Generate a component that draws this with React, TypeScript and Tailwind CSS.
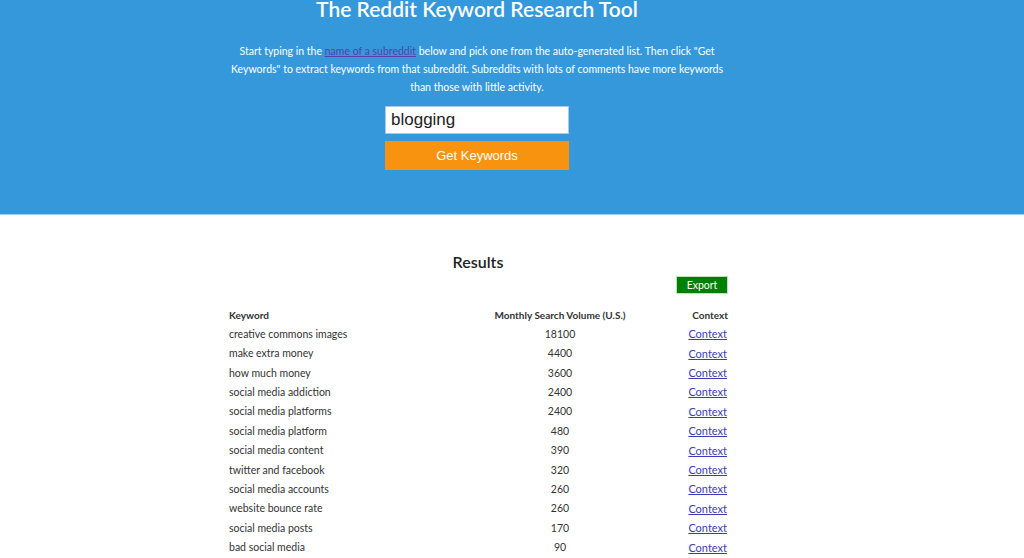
import React from "react";

const rows: [string, string][] = [
  ["creative commons images", "18100"],
  ["make extra money", "4400"],
  ["how much money", "3600"],
  ["social media addiction", "2400"],
  ["social media platforms", "2400"],
  ["social media platform", "480"],
  ["social media content", "390"],
  ["twitter and facebook", "320"],
  ["social media accounts", "260"],
  ["website bounce rate", "260"],
  ["social media posts", "170"],
  ["bad social media", "90"],
];

const App: React.FC = () => {
  return (
    <div className="min-h-[558px] bg-white font-['Lato',sans-serif] overflow-hidden">
      <div className="bg-[#3598db] border-b border-[#9dcdf0] h-[215px] flex flex-col items-center">
        <div className="w-[500px] ml-[-70px] flex flex-col items-center">
          <h1 className="text-white text-[21px] font-semibold leading-none mt-[-2px]">The Reddit Keyword Research Tool</h1>
          <p className="text-white text-[10.5px] leading-[18px] text-center mt-[23px] whitespace-nowrap">
            Start typing in the{" "}
            <a href="#" className="text-[#5b3fa8] underline">
              name of a subreddit
            </a>{" "}
            below and pick one from the auto-generated list. Then click "Get
            <br />
            Keywords" to extract keywords from that subreddit. Subreddits with lots of comments have more keywords
            <br />
            than those with little activity.
          </p>
          <input
            readOnly
            value="blogging"
            className="mt-[10px] w-[184px] h-[28px] bg-white border border-[#a9c9e8] px-[5px] text-[17px] text-[#222] font-['Liberation_Sans',sans-serif] outline-none"
          />
          <button className="mt-[7px] w-[184px] h-[29px] bg-[#f7930f] text-white text-[13px] font-['Liberation_Sans',sans-serif]">
            Get Keywords
          </button>
        </div>
      </div>

      <div className="w-[500px] ml-[228px] pt-[34px]">
        <h2 className="text-center text-[16px] font-semibold text-[#222] leading-[26px]">Results</h2>
        <div className="flex justify-end mt-[1px]">
          <button className="bg-[#008000] text-white text-[10.5px] w-[52px] h-[18px] leading-none border border-[#bfe0bf]">Export</button>
        </div>
        <table className="w-full mt-[11px] text-[10.5px] text-[#333] border-collapse">
          <thead>
            <tr className="h-[20px]">
              <th className="text-left font-bold text-[10px] p-0 pl-[1px]">Keyword</th>
              <th className="text-center font-bold text-[10px] p-0 w-[216px]">Monthly Search Volume (U.S.)</th>
              <th className="text-right font-bold text-[10px] p-0 w-[60px]">Context</th>
            </tr>
          </thead>
          <tbody>
            {rows.map(([k, v], i) => (
              <tr key={i} className="h-[19.4px]">
                <td className="p-0 pl-[1px]">{k}</td>
                <td className="p-0 text-center">{v}</td>
                <td className="p-0 text-right pr-[1px]">
                  <a href="#" className="text-[#3b3bb8] underline text-[11px]">
                    Context
                  </a>
                </td>
              </tr>
            ))}
          </tbody>
        </table>
      </div>
    </div>
  );
};

export default App;
